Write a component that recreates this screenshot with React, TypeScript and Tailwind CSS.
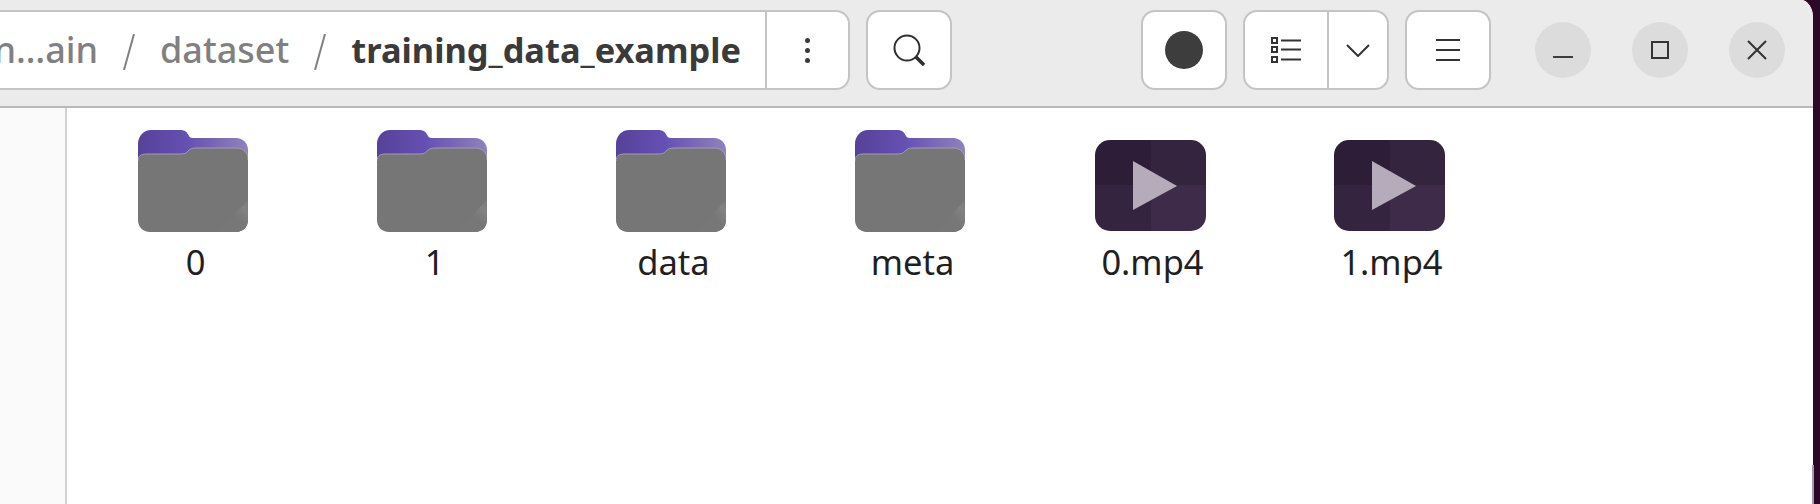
const fontStack = { fontFamily: '"Noto Sans", "Open Sans", sans-serif' };

function FolderIcon({ id }: { id: string }) {
  return (
    <svg width="110" height="102" viewBox="0 0 110 102">
      <defs>
        <linearGradient id={`tab-${id}`} x1="0" y1="0" x2="1" y2="0">
          <stop offset="0" stopColor="#554298" />
          <stop offset="0.45" stopColor="#6650b4" />
          <stop offset="1" stopColor="#8f82bd" />
        </linearGradient>
        <linearGradient id={`shine-${id}`} x1="0" y1="1" x2="1" y2="0">
          <stop offset="0.55" stopColor="#777777" />
          <stop offset="0.8" stopColor="#828282" />
          <stop offset="1" stopColor="#7a7a7a" />
        </linearGradient>
      </defs>
      <path d="M0 14C0 6 6 0 13 0H42C47 0 49 2 51 6C52 8 54 8 57 8H98C105 8 110 13 110 20V50H0Z" fill={`url(#tab-${id})`} />
      <path d="M0 31C0 26 3 24 8 24H42C47 24 48 23 50 21C52 19 54 18 58 18H98C106 18 110 23 110 30V90C110 97 105 102 98 102H12C5 102 0 97 0 90Z" fill="#767676" />
      <path d="M0 31C0 26 3 24 8 24H42C47 24 48 23 50 21C52 19 54 18 58 18H98C106 18 110 23 110 30" fill="none" stroke="#a29cb3" strokeWidth="1" />
      <path d="M110 70V90C110 97 105 102 98 102H80Z" fill={`url(#shine-${id})`} />
    </svg>
  );
}

function VideoIcon() {
  return (
    <svg width="111" height="91" viewBox="0 0 111 91">
      <clipPath id="vid">
        <rect width="111" height="91" rx="15" />
      </clipPath>
      <g clipPath="url(#vid)">
        <rect width="56" height="45" fill="#2e1d36" />
        <rect x="56" width="55" height="45" fill="#35243e" />
        <rect y="45" width="56" height="46" fill="#352440" />
        <rect x="56" y="45" width="55" height="46" fill="#3e2b49" />
      </g>
      <path d="M38 21L82 46L38 70Z" fill="#b5abba" />
    </svg>
  );
}

function SearchIcon() {
  return (
    <svg width="34" height="32" viewBox="0 0 34 32" fill="none" stroke="#2f2f2f">
      <circle cx="15" cy="14" r="12.5" strokeWidth="2" />
      <path d="M24 23L32 31" strokeWidth="3.5" />
    </svg>
  );
}

function ListIcon() {
  return (
    <svg width="30" height="26" viewBox="0 0 30 26" fill="none" stroke="#333333" strokeWidth="2">
      <rect x="1" y="1" width="5" height="5" />
      <rect x="1" y="10" width="5" height="5" />
      <rect x="1" y="20" width="5" height="5" />
      <path d="M10 3.5H30M10 12.5H30M10 22.5H30" />
    </svg>
  );
}

function Slash() {
  return (
    <svg width="14" height="36" viewBox="0 0 14 36" fill="none" stroke="#808080" strokeWidth="2" className="mt-[3px] shrink-0">
      <path d="M12 0L2 36" />
    </svg>
  );
}

function Cell({ name, video }: { name: string; video?: boolean }) {
  return (
    <div className="flex w-[239px] flex-col items-center">
      <div className="flex h-[102px] items-end">
        {video ? (
          <div className="mb-[1px] ml-[3px]">
            <VideoIcon />
          </div>
        ) : (
          <FolderIcon id={name} />
        )}
      </div>
      <div className={`mt-[10px] text-[34.5px] leading-[40px] text-[#1f1f1f] ${video ? "ml-[8px]" : "ml-[6px]"}`}>{name}</div>
    </div>
  );
}

export default function App() {
  return (
    <div className="relative h-[504px] w-[1820px] overflow-hidden bg-[#2c0a27]" style={fontStack}>
      <div className="flex h-full w-[1813px] flex-col overflow-hidden rounded-tr-[12px_18px] bg-white">
        <header className="flex h-[108px] shrink-0 items-start border-b-2 border-[#b9b9b9] bg-[#ebebeb] pt-[10px]">
          <div className="flex h-[80px] w-[850px] shrink-0 items-center justify-end rounded-r-[14px] border-y-2 border-r-2 border-[#c4c4c4] bg-white">
            <div className="flex min-w-0 flex-1 items-center justify-end gap-[24px] overflow-hidden whitespace-nowrap pr-[24px]">
              <span className="text-[36px] font-medium text-[#808080]">n…ain</span>
              <Slash />
              <span className="text-[36px] font-medium text-[#808080]">dataset</span>
              <Slash />
              <span className="text-[34.4px] font-bold text-[#3a3a3a]">training_data_example</span>
            </div>
            <div className="flex h-full w-[83px] shrink-0 flex-col items-center justify-center gap-[5px] border-l-2 border-[#c4c4c4]">
              <span className="h-[5px] w-[5px] rounded-full bg-[#3a3a3a]" />
              <span className="h-[5px] w-[5px] rounded-full bg-[#3a3a3a]" />
              <span className="h-[5px] w-[5px] rounded-full bg-[#3a3a3a]" />
            </div>
          </div>

          <button className="ml-[16px] flex h-[80px] w-[86px] items-center justify-center rounded-[14px] border-2 border-[#c4c4c4] bg-white">
            <SearchIcon />
          </button>

          <button className="ml-auto flex h-[80px] w-[86px] items-center justify-center rounded-[14px] border-2 border-[#c4c4c4] bg-white">
            <span className="h-[38px] w-[38px] rounded-full bg-[#3d3d3d]" />
          </button>

          <div className="ml-[16px] flex h-[80px] w-[146px] rounded-[14px] border-2 border-[#c4c4c4] bg-white">
            <div className="flex w-[84px] items-center justify-center border-r-2 border-[#c4c4c4]">
              <ListIcon />
            </div>
            <div className="flex flex-1 items-center justify-center">
              <svg width="24" height="13" viewBox="0 0 24 13" fill="none" stroke="#333333" strokeWidth="2">
                <path d="M1 1L12 12L23 1" />
              </svg>
            </div>
          </div>

          <button className="ml-[16px] flex h-[80px] w-[86px] items-center justify-center rounded-[14px] border-2 border-[#c4c4c4] bg-white">
            <svg width="24" height="22" viewBox="0 0 24 22" fill="none" stroke="#333333" strokeWidth="2">
              <path d="M0 1H24M0 11H24M0 21H24" />
            </svg>
          </button>

          <div className="ml-[44px] mr-[28px] mt-[12px] flex items-center gap-[41px]">
            <div className="flex h-[56px] w-[56px] items-center justify-center rounded-full bg-[#dcdcdc] pt-[14px]">
              <svg width="20" height="2" viewBox="0 0 20 2">
                <rect width="20" height="2" fill="#3d3d3d" />
              </svg>
            </div>
            <div className="flex h-[56px] w-[56px] items-center justify-center rounded-full bg-[#dcdcdc]">
              <svg width="18" height="18" viewBox="0 0 18 18" fill="none" stroke="#333333" strokeWidth="2">
                <rect x="1" y="1" width="16" height="16" />
              </svg>
            </div>
            <div className="flex h-[56px] w-[56px] items-center justify-center rounded-full bg-[#dcdcdc]">
              <svg width="20" height="20" viewBox="0 0 20 20" fill="none" stroke="#333333" strokeWidth="2">
                <path d="M1 1L19 19M19 1L1 19" />
              </svg>
            </div>
          </div>
        </header>

        <div className="flex flex-1">
          <aside className="w-[67px] shrink-0 border-r-2 border-[#d2d2d2] bg-[#fafafa]" />
          <main className="flex items-start pl-[6px] pt-[22px]">
            <Cell name="0" />
            <Cell name="1" />
            <Cell name="data" />
            <Cell name="meta" />
            <Cell name="0.mp4" video />
            <Cell name="1.mp4" video />
          </main>
        </div>
      </div>
      <div className="absolute left-[1812px] top-[465px] h-[39px] w-[2px] bg-[#a89aa8]" />
    </div>
  );
}
